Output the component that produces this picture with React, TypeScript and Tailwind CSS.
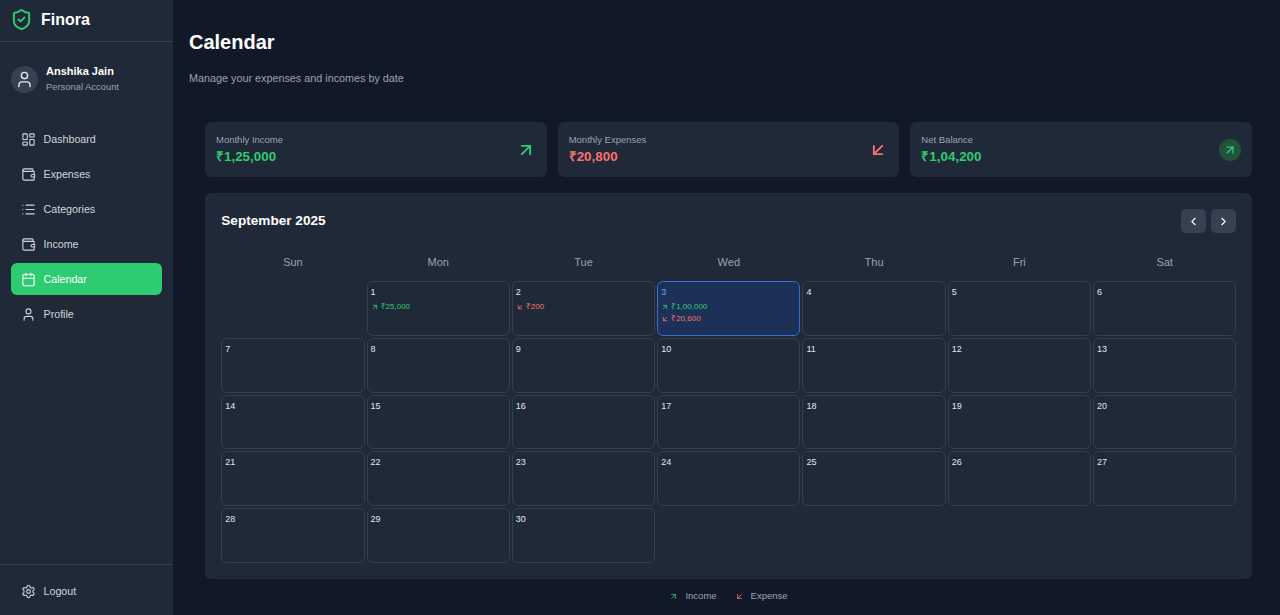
import { ArrowDownLeft, ArrowUpRight, Calendar, ChevronLeft, ChevronRight, LayoutDashboard, List, LucideIcon, Settings, ShieldCheck, User, Wallet } from "lucide-react";

const navItems: { label: string; icon: LucideIcon; active?: boolean }[] = [
  { label: "Dashboard", icon: LayoutDashboard },
  { label: "Expenses", icon: Wallet },
  { label: "Categories", icon: List },
  { label: "Income", icon: Wallet },
  { label: "Calendar", icon: Calendar, active: true },
  { label: "Profile", icon: User },
];

const weekDays = ["Sun", "Mon", "Tue", "Wed", "Thu", "Fri", "Sat"];

const entries: Record<number, { income?: string; expense?: string }> = {
  1: { income: "₹25,000" },
  2: { expense: "₹200" },
  3: { income: "₹1,00,000", expense: "₹20,600" },
};

const Sidebar = () => {
  return (
    <aside className="w-[173px] h-full shrink-0 bg-[#1f2937] flex flex-col">
      <div className="h-[42px] flex items-center gap-[8px] pl-[10px] pb-[2px] border-b border-[#374151]">
        <ShieldCheck size={23} strokeWidth={2} className="text-[#2ecc71]" />
        <span className="text-[16px] font-bold text-white">Finora</span>
      </div>
      <div className="flex items-center gap-[8px] pl-[11px] pt-[22px] pb-[22px]">
        <div className="w-[27px] h-[27px] rounded-full bg-[#374151] flex items-center justify-center">
          <User size={19} strokeWidth={1.75} className="text-[#e5e7eb]" />
        </div>
        <div className="flex flex-col">
          <span className="text-[11px] leading-[15px] font-bold text-white">Anshika Jain</span>
          <span className="text-[9.4px] leading-[15px] text-[#9ca3af]">Personal Account</span>
        </div>
      </div>
      <nav className="flex flex-col gap-[3px] px-[11px] pt-[7px]">
        {navItems.map((item) => (
          <div
            key={item.label}
            className={`h-[32px] flex items-center gap-[7.5px] pl-[10px] rounded-[6px] text-[10.7px] ${item.active ? "bg-[#2ecc71] text-white" : "text-[#d1d5db]"}`}
          >
            <item.icon size={15} strokeWidth={1.75} />
            <span>{item.label}</span>
          </div>
        ))}
      </nav>
      <div className="mt-auto h-[51px] border-t border-[#374151] flex items-center gap-[7.5px] pl-[21px] pt-[2px] text-[10.7px] text-[#d1d5db]">
        <Settings size={15} strokeWidth={1.75} />
        <span>Logout</span>
      </div>
    </aside>
  );
};

const StatCard = ({ label, value, color, children }: { label: string; value: string; color: string; children: React.ReactNode }) => {
  return (
    <div className="flex-1 h-[55px] bg-[#1f2937] rounded-[6px] flex items-center justify-between pl-[11px] pr-[11px]">
      <div className="flex flex-col">
        <span className="text-[9.5px] leading-[14px] text-[#9ca3af]">{label}</span>
        <span className={`text-[13.4px] leading-[20px] font-bold ${color}`}>{value}</span>
      </div>
      {children}
    </div>
  );
};

const DayCell = ({ day }: { day: number }) => {
  const entry = entries[day];
  const today = day === 3;
  return (
    <div className={`h-[54.75px] rounded-[6px] border px-[3px] pt-[3px] ${today ? "bg-[#1c3058] border-[#3370d0]" : "border-[#343f50]"}`}>
      <div className={`text-[9px] leading-[14px] ${today ? "text-[#60a5fa]" : "text-[#e5e7eb]"}`}>{day}</div>
      {entry && (
        <div className="pt-[1.5px]">
          {entry.income && (
            <div className="flex items-center gap-[2px] h-[12px] text-[8px] text-[#2ecc71]">
              <ArrowUpRight size={8} strokeWidth={2.5} />
              <span>{entry.income}</span>
            </div>
          )}
          {entry.expense && (
            <div className="flex items-center gap-[2px] h-[12px] text-[8px] text-[#f87171]">
              <ArrowDownLeft size={8} strokeWidth={2.5} />
              <span>{entry.expense}</span>
            </div>
          )}
        </div>
      )}
    </div>
  );
};

const App = () => {
  const days = Array.from({ length: 30 }, (_, i) => i + 1);
  return (
    <div className="w-[1280px] h-[615px] flex overflow-hidden bg-[#111827] font-['Liberation_Sans',Arial,sans-serif]">
      <Sidebar />
      <main className="flex-1 pl-[16px] pr-[28px]">
        <h1 className="text-[20px] leading-[28px] font-bold text-white pt-[28px]">Calendar</h1>
        <p className="text-[10.8px] leading-[16px] text-[#9ca3af] mt-[14px]">Manage your expenses and incomes by date</p>
        <div className="ml-[16px] mt-[36px]">
          <div className="flex gap-[11px]">
            <StatCard label="Monthly Income" value="₹1,25,000" color="text-[#2ecc71]">
              <ArrowUpRight size={20} strokeWidth={2.25} className="text-[#2ecc71]" />
            </StatCard>
            <StatCard label="Monthly Expenses" value="₹20,800" color="text-[#f87171]">
              <ArrowDownLeft size={20} strokeWidth={2.25} className="text-[#f87171]" />
            </StatCard>
            <StatCard label="Net Balance" value="₹1,04,200" color="text-[#2ecc71]">
              <div className="w-[22px] h-[22px] rounded-full bg-[#22543d] flex items-center justify-center">
                <ArrowUpRight size={14} strokeWidth={2.25} className="text-[#2ecc71]" />
              </div>
            </StatCard>
          </div>
          <section className="mt-[16px] h-[386px] bg-[#1f2937] rounded-[6px] pl-[16.3px] pr-[15.7px] pt-[16px]">
            <div className="h-[24px] flex items-center justify-between">
              <h2 className="text-[13.6px] font-bold text-white pt-[1px]">September 2025</h2>
              <div className="flex gap-[5px]">
                <button className="w-[25px] h-[24px] rounded-[5px] bg-[#374151] flex items-center justify-center text-white">
                  <ChevronLeft size={13} />
                </button>
                <button className="w-[25px] h-[24px] rounded-[5px] bg-[#374151] flex items-center justify-center text-white">
                  <ChevronRight size={13} />
                </button>
              </div>
            </div>
            <div className="grid grid-cols-7 gap-[2px] mt-[12px]">
              {weekDays.map((d) => (
                <div key={d} className="h-[34px] flex items-center justify-center text-[11px] text-[#9ca3af]">{d}</div>
              ))}
              <div />
              {days.map((d) => (
                <DayCell key={d} day={d} />
              ))}
            </div>
          </section>
          <div className="flex items-center justify-center gap-[18px] mt-[10px] text-[9.5px] text-[#9ca3af]">
            <div className="flex items-center gap-[7px]">
              <ArrowUpRight size={9} strokeWidth={2.25} className="text-[#2ecc71]" />
              <span>Income</span>
            </div>
            <div className="flex items-center gap-[7px]">
              <ArrowDownLeft size={9} strokeWidth={2.25} className="text-[#f87171]" />
              <span>Expense</span>
            </div>
          </div>
        </div>
      </main>
    </div>
  );
};

export default App;
